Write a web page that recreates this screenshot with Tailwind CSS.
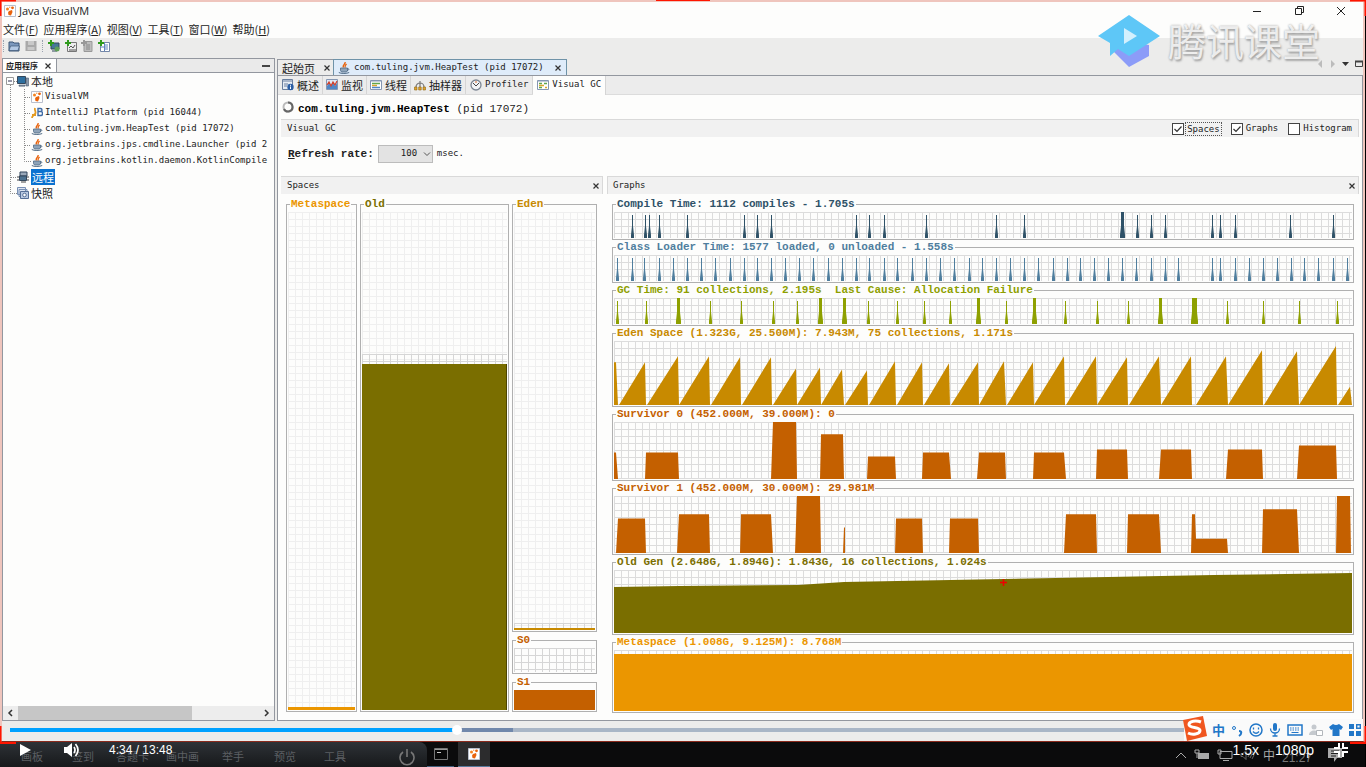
<!DOCTYPE html>
<html lang="zh-CN">
<head>
  <meta charset="UTF-8">
  <meta name="viewport" content="width=device-width, initial-scale=1.0">

  <title>Java VisualVM</title>

  <script src="https://cdn.jsdelivr.net/npm/@tailwindcss/browser@4"></script>
</head>
<body class="relative flex flex-col h-screen overflow-hidden bg-black pr-px text-[9px] text-[#222] font-['DejaVu_Sans_Mono','Noto_Sans_CJK_SC',monospace]">

  <!-- shared icons -->
  <svg class="absolute w-0 h-0" aria-hidden="true">
    <symbol id="vvm" viewBox="0 0 12 12">
      <path d="M.5.5h11v11H.5z" fill="#fff" stroke="#b9bfcc"/>
      <path d="M5 6l3-1 .5 2L7 10.500 4.500 10 4 7.500z" fill="#e8620c"/>
      <circle cx="3.500" cy="4" r="1.500" fill="#f58220"/><circle cx="8.500" cy="2.800" r="1.400" fill="#e8620c"/><circle cx="5.700" cy="2.300" r=".8" fill="#f7a35c"/>
    </symbol>
    <symbol id="java" viewBox="0 0 12 12">
      <path d="M7 0c1 2-3 3-1.500 5.500M8.500 2C7 3.500 6.500 4 7.500 5.500" fill="none" stroke="#e8620c" stroke-width="1.400"/>
      <path d="M2.500 6h7v2.500L8.500 10h-5l-1-1.500z" fill="#8ea3b8" stroke="#4f6a85" stroke-width=".8"/>
      <path d="M9.500 6.500c2 0 1.500 2-.5 2M.8 10.500c2 1.300 8 1.300 10.400 0" fill="none" stroke="#4f6a85"/>
    </symbol>
    <symbol id="host" viewBox="0 0 12 12">
      <path d="M.5 1.500h8v7h-8z" fill="#2e6f9f" stroke="#33475c"/>
      <path d="M9 3h2.500v8H9zM2 10h6v1.200H2z" fill="#8b99ab" stroke="#4a5a6e" stroke-width=".6"/>
    </symbol>
    <symbol id="tee" viewBox="0 0 14 16"><path d="M7.500 0v16M8 8.500h6" fill="none" stroke="#8a8a8a" stroke-dasharray="1 1"/></symbol>
    <symbol id="elbow" viewBox="0 0 14 16"><path d="M7.500 0v8.500H14" fill="none" stroke="#8a8a8a" stroke-dasharray="1 1"/></symbol>
    <symbol id="trunk" viewBox="0 0 14 16"><path d="M7.500 0v16" fill="none" stroke="#8a8a8a" stroke-dasharray="1 1"/></symbol>
    <symbol id="close" viewBox="0 0 8 8"><path d="M1.500 1.500l5 5M6.500 1.500l-5 5" fill="none" stroke="#333" stroke-width="1.200"/></symbol>
    <symbol id="plus" viewBox="0 0 6 6"><path d="M3 0v6M0 3h6" stroke="#2f9a1c" stroke-width="2"/></symbol>
    <symbol id="check" viewBox="0 0 12 12"><path d="M2.500 6l2.500 2.500L9.500 3.500" fill="none" stroke="#333" stroke-width="1.200"/></symbol>
  </svg>

  <div class="flex flex-col flex-1 min-h-0 bg-[#ececeb] border-2 border-b border-[#efc5bd] border-b-[#8a2a1c]">

    <header>
      <div class="flex items-center h-[18px] bg-[#fdfdfc] pl-0.5 text-[11px] font-['Open_Sans',sans-serif]">
        <svg class="size-3 mr-[3px]"><use href="#vvm"/></svg>
        <h1 class="flex-1">Java VisualVM</h1>
        <div class="flex gap-[30px] mr-4">
          <button aria-label="Minimize"><svg class="size-3" viewBox="0 0 12 12"><path d="M2 6.500h8" stroke="#222"/></svg></button>
          <button aria-label="Restore"><svg class="size-3" viewBox="0 0 12 12"><path d="M2.500 3.500h6v6h-6zM4.500 3.500v-2h6v6h-2" fill="none" stroke="#222"/></svg></button>
          <button aria-label="Close"><svg class="size-3" viewBox="0 0 12 12"><path d="M2 2l8 8M10 2l-8 8" fill="none" stroke="#222"/></svg></button>
        </div>
      </div>

      <nav class="flex items-center gap-[5px] h-[18px] bg-[#fdfdfc] pl-px text-[11px] font-['Noto_Sans_CJK_SC',sans-serif]">
        <button>文件(<u>F</u>)</button>
        <button>应用程序(<u>A</u>)</button>
        <button>视图(<u>V</u>)</button>
        <button>工具(<u>T</u>)</button>
        <button>窗口(<u>W</u>)</button>
        <button>帮助(<u>H</u>)</button>
      </nav>

      <div class="flex items-start h-5 pt-0.5 pl-px gap-1">
        <span class="h-3 border-l border-dotted border-gray-400"></span>
        <button aria-label="Open"><svg class="size-3" viewBox="0 0 12 12"><path d="M1 2h4l1 1h5v8H1z" fill="#7b98bd" stroke="#3c5676"/><path d="M2.500 6h9L10 10.500H1z" fill="#b3c9e4" stroke="#3c5676" stroke-width=".7"/></svg></button>
        <button class="ml-px" aria-label="Save"><svg class="size-3" viewBox="0 0 12 12"><path d="M.5 1h11v10H.5z" fill="#a9a9a9"/><path d="M3 1h6v4H3zM2.500 7h7v3h-7z" fill="#c9c9c9"/></svg></button>
        <span class="h-3 border-l border-dotted border-gray-400 mx-px"></span>
        <button aria-label="Add host"><svg class="size-3" viewBox="0 0 12 12"><path d="M3 3h8v6H3z" fill="#467996" stroke="#33475c"/><path d="M4 11h5" stroke="#33475c"/><circle cx="9" cy="9" r="2.500" fill="#5f9f58"/><use href="#plus" width="6" height="6"/></svg></button>
        <button aria-label="Add JMX connection"><svg class="size-3 ml-px" viewBox="0 0 12 12"><path d="M2.500 2.500h9v9h-9z" fill="#eee" stroke="#777"/><path d="M4 8l2-2 2 2 2-3M4 10h7" fill="none" stroke="#555"/><use href="#plus" width="6" height="6"/></svg></button>
        <button aria-label="Add dump"><svg class="size-3" viewBox="0 0 12 12"><path d="M3 1.500h8v10H3z" fill="#bdbdbd" stroke="#999"/><path d="M5 5h4M5 7h4M5 9h4" stroke="#888"/><path d="M3 0v6M0 3h6" stroke="#999" stroke-width="2"/></svg></button>
        <button aria-label="Load snapshot"><svg class="size-3 ml-px" viewBox="0 0 12 12"><path d="M2.500 2.500h9v9h-9z" fill="#fff" stroke="#7387a8"/><path d="M6.500 3v8M7 5h3M7 7h3M7 9h3M3 7h3" stroke="#5f83bd"/><use href="#plus" width="6" height="6"/></svg></button>
      </div>
    </header>

    <main class="flex flex-1 min-h-0 gap-0.5">

      <!-- applications tree -->
      <aside class="flex flex-col w-[273px] shrink-0 border border-[#93979f] bg-[#fdfdfc]">
        <div class="flex items-center h-[14px] bg-[#eaeaea] border-b border-[#93979f] pr-1">
          <h2 class="flex items-center gap-1.5 h-full bg-white border-r border-[#93979f] pl-[3px] pr-1 font-bold text-[8px] leading-none font-['Noto_Sans_CJK_SC',sans-serif]">应用程序
            <button aria-label="Close"><svg class="size-2"><use href="#close"/></svg></button>
          </h2>
          <button class="ml-auto w-2 h-0.5 bg-[#444]" aria-label="Minimize panel"></button>
        </div>

        <ul class="flex-1 overflow-hidden whitespace-nowrap">
          <li class="flex items-center h-4">
            <svg class="w-[14px] h-4 shrink-0" viewBox="0 0 14 16"><path d="M7.500 12v4M11 8.500h3" stroke="#8a8a8a" stroke-dasharray="1 1"/><path d="M3.500 4.500h7v7h-7z" fill="#fff" stroke="#999"/><path d="M5 8h4" stroke="#335"/></svg>
            <svg class="size-3 mr-0.5"><use href="#host"/></svg><span class="text-[11px] leading-4 font-['Noto_Sans_CJK_SC',sans-serif]">本地</span>
          </li>
          <li class="flex items-center h-4">
            <svg class="w-[14px] h-4 shrink-0"><use href="#trunk"/></svg><svg class="w-[14px] h-4 shrink-0"><use href="#tee"/></svg>
            <svg class="size-3 mr-0.5 shrink-0"><use href="#vvm"/></svg>VisualVM
          </li>
          <li class="flex items-center h-4">
            <svg class="w-[14px] h-4 shrink-0"><use href="#trunk"/></svg><svg class="w-[14px] h-4 shrink-0"><use href="#tee"/></svg>
            <svg class="size-3 mr-0.5 shrink-0" viewBox="0 0 12 12"><path d="M4 1c-1 3 2 4 0 6s-3 2-3 4M1 8h4" fill="none" stroke="#e39a20" stroke-width="1.800"/><path d="M7 1.500h2.500c2 0 2 3 0 3H7zm0 3h3c2 0 2 4 0 4H7z" fill="none" stroke="#3f6ba5" stroke-width="1.400"/></svg>IntelliJ Platform (pid 16044)
          </li>
          <li class="flex items-center h-4">
            <svg class="w-[14px] h-4 shrink-0"><use href="#trunk"/></svg><svg class="w-[14px] h-4 shrink-0"><use href="#tee"/></svg>
            <svg class="size-3 mr-0.5 shrink-0"><use href="#java"/></svg>com.tuling.jvm.HeapTest (pid 17072)
          </li>
          <li class="flex items-center h-4">
            <svg class="w-[14px] h-4 shrink-0"><use href="#trunk"/></svg><svg class="w-[14px] h-4 shrink-0"><use href="#tee"/></svg>
            <svg class="size-3 mr-0.5 shrink-0"><use href="#java"/></svg>org.jetbrains.jps.cmdline.Launcher (pid 2
          </li>
          <li class="flex items-center h-4">
            <svg class="w-[14px] h-4 shrink-0"><use href="#trunk"/></svg><svg class="w-[14px] h-4 shrink-0"><use href="#elbow"/></svg>
            <svg class="size-3 mr-0.5 shrink-0"><use href="#java"/></svg>org.jetbrains.kotlin.daemon.KotlinCompile
          </li>
          <li class="flex items-center h-4">
            <svg class="w-[14px] h-4 shrink-0"><use href="#tee"/></svg>
            <svg class="size-3 mr-0.5" viewBox="0 0 12 12"><path d="M3 1h7v4H3z" fill="#9aa9ba" stroke="#33475c"/><path d="M2.500 5h7v4.500h-7z" fill="#4d7290" stroke="#33475c"/><path d="M0 6h2M10 6h2M0 9h2M10 9h2M4 11h5" stroke="#444"/></svg><span class="bg-[#0a72d0] text-white px-px text-[11px] leading-4 font-['Noto_Sans_CJK_SC',sans-serif]">远程</span>
          </li>
          <li class="flex items-center h-4">
            <svg class="w-[14px] h-4 shrink-0"><use href="#elbow"/></svg>
            <svg class="size-3 mr-0.5" viewBox="0 0 12 12"><path d="M.5.5h8v7h-8zM2 2.500h8v7H2z" fill="#dde5f2" stroke="#7890b5"/><path d="M3.500 4.500h8v7h-8z" fill="#b9c9e2" stroke="#566f96"/><circle cx="7.500" cy="8" r="1.800" fill="#fff" stroke="#566f96"/></svg><span class="text-[11px] leading-4 font-['Noto_Sans_CJK_SC',sans-serif]">快照</span>
          </li>
        </ul>

        <div class="flex items-center h-[14px] bg-[#ededed]">
          <svg class="w-[15px] h-3" viewBox="0 0 15 12"><path d="M9 3L6 6l3 3" fill="none" stroke="#333" stroke-width="1.500"/></svg>
          <div class="flex-1 h-full"><div class="w-[72%] h-full bg-[#c6c6c6]"></div></div>
          <svg class="w-[15px] h-3" viewBox="0 0 15 12"><path d="M6 3l3 3-3 3" fill="none" stroke="#333" stroke-width="1.500"/></svg>
        </div>
      </aside>

      <section class="flex flex-col flex-1 min-w-0">
        <div class="flex h-[18px] pt-px border-b border-[#93979f] whitespace-nowrap">
          <div class="flex items-center gap-2 pl-1 pr-0.5 border-t border-l border-[#93979f] text-[11px] leading-4 font-['Noto_Sans_CJK_SC',sans-serif]">起始页<button aria-label="Close"><svg class="size-2"><use href="#close"/></svg></button></div>
          <div class="flex items-center gap-1 px-1 border border-b-0 border-[#6f93a8] bg-[#dfecfa]">
            <svg class="size-3"><use href="#java"/></svg>com.tuling.jvm.HeapTest (pid 17072)<button class="ml-1.5" aria-label="Close"><svg class="size-2"><use href="#close"/></svg></button>
          </div>
          <svg class="ml-auto w-[46px] h-3" viewBox="0 0 46 12"><path d="M5 1v8L1 5zM14 1v8l4-4z" fill="#bcbcbc"/><path d="M25 3h7l-3.500 4z" fill="#333"/><path d="M38.500 2.500h7v5h-7z" fill="none" stroke="#444"/><path d="M38 2.500h8" stroke="#444" stroke-width="2"/></svg>
        </div>

        <div class="flex flex-col flex-1 min-h-0 border border-t-0 border-[#93979f] bg-[#fdfdfc]">
          <div class="flex h-[19px] bg-[#ececec] border-b border-[#dcdcdc] pl-px [&>button]:flex [&>button]:items-center [&>button]:gap-[3px] [&>button]:border-r [&>button]:border-[#d5d5d5]">
            <button class="px-[3px] text-[11px] leading-4 font-['Noto_Sans_CJK_SC',sans-serif]"><svg class="size-3" viewBox="0 0 12 12"><path d="M.5.5h10v10H.5z" fill="#e7edf5" stroke="#6a7f9e"/><path d="M1 2h9M2 5h4M2 7h3" stroke="#6a7f9e"/><circle cx="8.500" cy="8" r="3.200" fill="#2c5fa5"/><path d="M8.500 5.800v1M8.500 7.500V10" stroke="#fff"/></svg>概述</button>
            <button class="px-[3px] text-[11px] leading-4 font-['Noto_Sans_CJK_SC',sans-serif]"><svg class="size-3" viewBox="0 0 12 12"><path d="M.5.5h11v10H.5z" fill="#dfe8f4" stroke="#8496b2"/><path d="M1 10V7l2-3 2 3 2-4 2 4 2-3v6z" fill="#4f86c6"/><path d="M1 6l2-3 2 4 2-4 2 3 2-4" fill="none" stroke="#d0402b" stroke-width="1.200"/></svg>监视</button>
            <button class="px-[3px] text-[11px] leading-4 font-['Noto_Sans_CJK_SC',sans-serif]"><svg class="size-3" viewBox="0 0 12 12"><path d="M.5 1.500h11v9H.5z" fill="#fff" stroke="#8496b2"/><path d="M1 2h10" stroke="#8496b2"/><path d="M2 4.500h8" stroke="#5fa64f" stroke-width="1.500"/><path d="M2 6.500h5" stroke="#d8a62e" stroke-width="1.500"/><path d="M2 8.500h8" stroke="#4f86c6" stroke-width="1.500"/></svg>线程</button>
            <button class="px-[3px] text-[11px] leading-4 font-['Noto_Sans_CJK_SC',sans-serif]"><svg class="size-3" viewBox="0 0 12 12"><path d="M2 8a4 4 0 1 1 8 0M6 2v7" fill="none" stroke="#777" stroke-width="1.200"/><path d="M.5 8h2.500v3H.5zM4.700 8h2.500v3H4.700zM9 8h2.500v3H9z" fill="#e2a52d" stroke="#8f6514" stroke-width=".6"/></svg>抽样器</button>
            <button class="px-1"><svg class="size-3" viewBox="0 0 12 12"><circle cx="6" cy="6" r="5" fill="#f2f4f7" stroke="#7d8794" stroke-width="1.300"/><path d="M3 4l3 3 3-3" fill="none" stroke="#444"/><path d="M6 2v2" stroke="#d8682a"/></svg>Profiler</button>
            <button class="px-1 bg-[#fdfdfc] -mb-px pb-0.5"><svg class="size-3" viewBox="0 0 12 12"><path d="M.5 1.500h11v9H.5z" fill="#fff" stroke="#8496b2"/><path d="M1 2h10" stroke="#8496b2"/><path d="M2 4.500h3M7 4.500h3M2 8.500h3" stroke="#5fa64f" stroke-width="1.500"/><path d="M2 6.500h5M8 8.500h2" stroke="#d8a62e" stroke-width="1.500"/></svg>Visual GC</button>
          </div>

          <div class="flex items-center gap-1 h-6 px-1 pt-1 text-[11px] font-['Liberation_Mono',monospace]">
            <svg class="size-3 -mt-1" viewBox="0 0 12 12"><circle cx="6" cy="6" r="4.500" fill="none" stroke="#bbb" stroke-width="2"/><path d="M6 1.500A4.500 4.500 0 1 1 2 8" fill="none" stroke="#666" stroke-width="2"/></svg>
            <p><b class="text-black">com.tuling.jvm.HeapTest</b> (pid 17072)</p>
          </div>

          <div class="flex flex-col flex-1 px-[3px]">
            <div class="flex items-center gap-2.5 h-[18px] px-1.5 bg-[#f1f1f1] border-t border-r border-[#d9d9d9]">
              <h2 class="flex-1">Visual GC</h2>
              <label class="flex items-center gap-0.5"><span class="grid"><input type="checkbox" checked class="col-start-1 row-start-1 appearance-none size-3 border border-[#444] bg-white"><svg class="col-start-1 row-start-1 size-3 pointer-events-none"><use href="#check"/></svg></span><span class="leading-3 px-px outline-1 outline-dotted outline-[#555]">Spaces</span></label>
              <label class="flex items-center gap-[3px]"><span class="grid"><input type="checkbox" checked class="col-start-1 row-start-1 appearance-none size-3 border border-[#444] bg-white"><svg class="col-start-1 row-start-1 size-3 pointer-events-none"><use href="#check"/></svg></span>Graphs</label>
              <label class="flex items-center gap-[3px]"><input type="checkbox" class="appearance-none size-3 border border-[#444] bg-white">Histogram</label>
            </div>

            <div class="flex items-center gap-1 h-[39px] pl-[7px] pb-1.5">
              <label for="rate" class="font-bold text-[11px] leading-4 font-['Liberation_Mono',monospace]"><u>R</u>efresh rate:</label>
              <span class="grid items-center">
                <select id="rate" class="col-start-1 row-start-1 appearance-none w-[55px] h-[18px] pl-[22px] border border-[#bcbcbc] bg-[#e3e3e3]"><option>100</option><option>200</option><option>500</option></select>
                <svg class="col-start-1 row-start-1 justify-self-end size-2 mr-0.5 pointer-events-none" viewBox="0 0 8 8"><path d="M1 2.500l3 3 3-3" fill="none" stroke="#555"/></svg>
              </span>
              <span>msec.</span>
            </div>

            <div class="grid grid-cols-[322px_1fr] gap-1 flex-1 [&_fieldset]:min-w-0 [&_fieldset]:border [&_fieldset]:border-[#b0b0b0] [&_fieldset]:px-px [&_fieldset]:pb-px [&_legend]:ml-0.5 [&_legend]:px-px [&_legend]:text-[11px] [&_legend]:leading-3 [&_legend]:font-bold [&_legend]:font-['Liberation_Mono',monospace]">

              <section class="flex flex-col">
                <div class="flex items-center justify-between h-[18px] pl-1.5 pr-0.5 bg-[#f1f1f1] border-t border-r border-[#d9d9d9]">
                  <h3>Spaces</h3>
                  <button aria-label="Close Spaces"><svg class="size-2"><use href="#close"/></svg></button>
                </div>
                <div class="grid grid-cols-[71fr_149fr_85fr] gap-[3px] flex-1 pt-1 pb-2 pl-[5px] pr-1.5">
                  <fieldset class="flex flex-col">
                    <legend class="text-[#eb9600]">Metaspace</legend>
                    <div class="flex flex-col justify-end flex-1 mt-0.5 bg-[linear-gradient(#efefef_1px,transparent_1px),linear-gradient(90deg,#efefef_1px,transparent_1px)] bg-size-[7px_7px]">
                      <div class="h-[3px] bg-[#eb9600]"></div>
                    </div>
                  </fieldset>
                  <fieldset class="flex flex-col">
                    <legend class="text-[#7a6e00]">Old</legend>
                    <div class="flex flex-col justify-end flex-1 mt-0.5 bg-[linear-gradient(#efefef_1px,transparent_1px),linear-gradient(90deg,#efefef_1px,transparent_1px)] bg-size-[7px_7px]">
                      <div class="h-2.5 bg-[linear-gradient(#d6d6d6_1px,transparent_1px),linear-gradient(90deg,#d6d6d6_1px,transparent_1px)] bg-size-[7px_7px]"></div>
                      <div class="h-[69.5%] bg-[#7a6e00] border-r border-[#4d4500]"></div>
                    </div>
                  </fieldset>
                  <div class="flex flex-col gap-0.5">
                    <fieldset class="flex flex-col flex-1">
                      <legend class="text-[#c88a00]">Eden</legend>
                      <div class="flex flex-col justify-end flex-1 mt-0.5 bg-[linear-gradient(#efefef_1px,transparent_1px),linear-gradient(90deg,#efefef_1px,transparent_1px)] bg-size-[7px_7px]">
                        <div class="h-[5px] bg-[linear-gradient(#d6d6d6_1px,transparent_1px),linear-gradient(90deg,#d6d6d6_1px,transparent_1px)] bg-size-[7px_7px]"></div>
                        <div class="h-0.5 bg-[#c88a00]"></div>
                      </div>
                    </fieldset>
                    <fieldset>
                      <legend class="text-[#c46000]">S0</legend>
                      <div class="h-6 mt-0.5 bg-[linear-gradient(#d6d6d6_1px,transparent_1px),linear-gradient(90deg,#d6d6d6_1px,transparent_1px)] bg-size-[7px_7px]"></div>
                    </fieldset>
                    <fieldset>
                      <legend class="text-[#c46000]">S1</legend>
                      <div class="h-5 mt-0.5 bg-[#c46000]"></div>
                    </fieldset>
                  </div>
                </div>
              </section>

              <section class="flex flex-col min-w-0">
                <div class="flex items-center justify-between h-[18px] pl-[5px] pr-0.5 bg-[#f1f1f1] border-t border-x border-[#d9d9d9]">
                  <h3>Graphs</h3>
                  <button aria-label="Close Graphs"><svg class="size-2"><use href="#close"/></svg></button>
                </div>
                <div class="flex flex-col gap-px pt-1 pl-[5px] pr-[5px] [&_svg]:block [&_svg]:w-full [&_svg]:mt-0.5 [&_svg]:bg-[linear-gradient(#dcdcdc_1px,transparent_1px),linear-gradient(90deg,#dcdcdc_1px,transparent_1px)] [&_svg]:bg-size-[7px_7px]">
                  <fieldset>
                    <legend class="text-[#2f5268]">Compile Time: 1112 compiles - 1.705s</legend>
                    <svg class="h-[26px] fill-[#2f5268]" viewBox="0 0 738 26" preserveAspectRatio="none"><path id="compile"/></svg>
                  </fieldset>
                  <fieldset>
                    <legend class="text-[#4f7e9e]">Class Loader Time: 1577 loaded, 0 unloaded - 1.558s</legend>
                    <svg class="h-[26px] fill-[#4f7e9e]" viewBox="0 0 738 26" preserveAspectRatio="none"><path id="loader"/></svg>
                  </fieldset>
                  <fieldset>
                    <legend class="text-[#8ea000] whitespace-pre">GC Time: 91 collections, 2.195s  Last Cause: Allocation Failure</legend>
                    <svg class="h-[26px] fill-[#8ea000]" viewBox="0 0 738 26" preserveAspectRatio="none"><path id="gc"/></svg>
                  </fieldset>
                  <fieldset>
                    <legend class="text-[#c88a00]">Eden Space (1.323G, 25.500M): 7.943M, 75 collections, 1.171s</legend>
                    <svg class="h-16 fill-[#c88a00]" viewBox="0 0 738 63" preserveAspectRatio="none"><path id="eden"/></svg>
                  </fieldset>
                  <fieldset>
                    <legend class="text-[#c46000]">Survivor 0 (452.000M, 39.000M): 0</legend>
                    <svg class="h-[57px] fill-[#c46000]" viewBox="0 0 738 56" preserveAspectRatio="none"><path id="s0"/></svg>
                  </fieldset>
                  <fieldset>
                    <legend class="text-[#c46000]">Survivor 1 (452.000M, 30.000M): 29.981M</legend>
                    <svg class="h-[57px] fill-[#c46000]" viewBox="0 0 738 56" preserveAspectRatio="none"><path id="s1"/></svg>
                  </fieldset>
                  <fieldset>
                    <legend class="text-[#7a6e00]">Old Gen (2.648G, 1.894G): 1.843G, 16 collections, 1.024s</legend>
                    <svg class="h-[63px] fill-[#7a6e00]" viewBox="0 0 738 63" preserveAspectRatio="none"><path d="M0 63V17l66-1 118-1 46-3 160-3 210-4 138-2v60z"/><path d="M386 12.500h7M389.500 9v7" stroke="#f00000" stroke-width="1.500"/></svg>
                  </fieldset>
                  <fieldset>
                    <legend class="text-[#eb9600]">Metaspace (1.008G, 9.125M): 8.768M</legend>
                    <svg class="h-[61px] fill-[#eb9600]" viewBox="0 0 738 61" preserveAspectRatio="none"><path d="M0 4h738v57H0z"/></svg>
                  </fieldset>
                </div>
              </section>

            </div>
          </div>
        </div>
      </section>
    </main>

    <div class="h-5 shrink-0"></div>
  </div>

  <!-- taskbar -->
  <footer class="flex items-stretch h-[25px] bg-[#0b0b0c] text-[11px] text-[#5c5f63] font-['Noto_Sans_CJK_SC',sans-serif]">
    <div class="flex items-center w-[427px] pl-[21px] pt-1 rounded-tr-lg bg-linear-to-b from-[#2e3237] to-[#17191b]">
      <span class="w-[51px]">画板</span><span class="w-11">签到</span><span class="w-[50px]">答题卡</span><span class="w-14">画中画</span><span class="w-[52px]">举手</span><span class="w-[50px]">预览</span><span>工具</span>
      <svg class="size-5 ml-auto mr-2.5" viewBox="0 0 20 20"><path d="M6 5a7 7 0 1 0 8 0M10 2v8" fill="none" stroke="#777" stroke-width="1.600"/></svg>
    </div>
    <div class="flex items-center justify-center w-[27px] border-b border-[#44617e]"><svg class="w-[14px] h-3" viewBox="0 0 14 12"><path d="M.5.5h13v11H.5z" fill="#090909" stroke="#777"/><path d="M1 1.500h12" stroke="#999"/><path d="M3 4.500h4" stroke="#ccc"/></svg></div>
    <div class="flex items-center justify-center w-8 ml-1 bg-[#2c2c2d] border-b border-[#57799b]"><svg class="size-3"><use href="#vvm"/></svg></div>
    <div class="flex items-center gap-[7px] ml-auto mr-[22px] text-[#aaa]">
      <svg class="size-3" viewBox="0 0 12 12"><path d="M1 9l5-5 5 5" fill="none" stroke="#aaa"/></svg>
      <svg class="w-4 h-3" viewBox="0 0 16 12"><path d="M4 4h11v6H4z" fill="#aaa"/><path d="M1 1h4v3H1zM3 4v5" fill="none" stroke="#aaa"/></svg>
      <svg class="w-4 h-3" viewBox="0 0 16 12"><path d="M3 2.500h12v7H3zM6 11.500h6M1 1h3v4H1z" fill="none" stroke="#aaa"/></svg>
      <svg class="w-4 h-3" viewBox="0 0 16 12"><path d="M1 4.500h2l3-3v9l-3-3H1zM8 4l1 2-1 2M10 3l1.500 3L10 9M12 2l2 4-2 4" fill="none" stroke="#666"/></svg>
      <span class="text-xs">中</span>
      <span class="pt-1.5 text-xs text-[#777] font-['Liberation_Sans',sans-serif]">21:27</span>
      <svg class="size-4 ml-2" viewBox="0 0 16 16"><path d="M1 1h14v10h-5l-3 4v-4H1z" fill="#aaa"/><path d="M4 4h8M4 6.500h8M4 9h5" stroke="#222"/></svg>
    </div>
  </footer>

  <!-- recording frame corners -->
  <svg class="absolute left-0 top-0 w-4 h-4" viewBox="0 0 16 16"><path d="M16 .5H.5V16" fill="none" stroke="#ff1500" stroke-width="2"/></svg>
  <div class="absolute left-1/2 top-0 w-[54px] h-px -translate-x-1/2 bg-[#ff1500]"></div>
  <svg class="absolute right-0 top-0 w-4 h-4" viewBox="0 0 16 16"><path d="M0 .5h15.500V16" fill="none" stroke="#ff1500" stroke-width="2"/></svg>
  <svg class="absolute left-0 bottom-[23px] w-4 h-[18px]" viewBox="0 0 16 18"><path d="M.5 0v17H16" fill="none" stroke="#ff1500" stroke-width="2"/></svg>
  <svg class="absolute right-0 bottom-[23px] w-4 h-[18px]" viewBox="0 0 16 18"><path d="M15.500 0v17H0" fill="none" stroke="#ff1500" stroke-width="2"/></svg>

  <!-- watermark -->
  <div class="absolute right-[46px] top-3 flex items-center gap-2 pointer-events-none">
    <svg class="w-[62px] h-14" viewBox="0 0 62 56"><path d="M15 39l16-9 20 3v11L31 55z" fill="#8c9cf8"/><path d="M31 3l31 21-31 20-11-7-8 7V31L0 24z" fill="#5ec7f7"/><path d="M26 16v16l13-8z" fill="#d3f0fd"/></svg>
    <span class="text-[38px] leading-[54px] text-white/80 font-['Noto_Sans_CJK_SC',sans-serif] [text-shadow:0_0_2px_#999,1px_2px_2px_#aaa]">腾讯课堂</span>
  </div>

  <!-- player controls -->
  <div class="absolute inset-x-0 bottom-0 h-[42px] text-white font-['Liberation_Sans',sans-serif]">
    <input type="range" min="0" max="828" value="274" aria-label="Progress" class="absolute left-2.5 right-2.5 top-[3px] w-[calc(100%-20px)] h-1 appearance-none bg-[linear-gradient(90deg,#00a1ff_33%,#7188ab_33%_37.4%,#a9b6c6_37.4%)] [&::-webkit-slider-thumb]:appearance-none [&::-webkit-slider-thumb]:size-2.5 [&::-webkit-slider-thumb]:rounded-full [&::-webkit-slider-thumb]:bg-white">
    <div class="flex items-center h-full pt-[7px] pl-[19px] pr-[18px]">
      <button aria-label="Play"><svg class="w-3 h-3.5" viewBox="0 0 12 14"><path d="M1 1l11 6-11 6z" fill="#fff"/></svg></button>
      <button class="ml-8" aria-label="Volume"><svg class="w-[18px] h-4" viewBox="0 0 18 16"><path d="M1 5h3l5-4v14l-5-4H1z" fill="#fff"/><path d="M11 5q2 3 0 6M12.500 2q5 6 0 12" fill="none" stroke="#fff" stroke-width="1.700"/></svg></button>
      <span class="ml-7 text-xs">4:34 / 13:48</span>
      <button class="ml-auto text-sm">1.5x</button>
      <button class="ml-4 text-sm">1080p</button>
      <button class="ml-5" aria-label="Exit full screen"><svg class="size-3.5" viewBox="0 0 14 14"><path d="M5 0v5H0M9 0v5h5M5 14V9H0M9 14V9h5" fill="none" stroke="#fff" stroke-width="2"/></svg></button>
    </div>
  </div>

  <!-- input method bar -->
  <div class="absolute right-[3px] bottom-[26px] flex items-center gap-1.5 h-[22px] pl-6 pr-0.5 bg-[#fafafa] text-[#2277c8] text-[13px] font-bold font-['Noto_Sans_CJK_SC',sans-serif]">
    <svg class="absolute -left-1 -top-1 w-7 h-7" viewBox="0 0 28 28"><path d="M3 5L23 1l4 20L7 26z" fill="#f0561f"/><path d="M21 7c-5-2-12-1-12 2.500 0 4 11 2 11 6S12 20 8 18" fill="none" stroke="#fff" stroke-width="3"/></svg>
    <span class="ml-1">中</span>
    <svg class="w-3 h-3.5" viewBox="0 0 12 14"><circle cx="3" cy="5" r="1.500" fill="none" stroke="#2277c8"/><path d="M8 8c3 0 3 3 0 5" fill="none" stroke="#2277c8" stroke-width="2"/></svg>
    <svg class="size-3.5" viewBox="0 0 14 14"><circle cx="7" cy="7" r="6" fill="none" stroke="#2277c8" stroke-width="1.500"/><path d="M4.500 4.500v2M9.500 4.500v2M4 8.500q3 3.500 6 0" fill="none" stroke="#2277c8" stroke-width="1.300"/></svg>
    <svg class="w-3 h-3.5" viewBox="0 0 12 14"><rect x="4" width="4" height="8" rx="2" fill="#2277c8"/><path d="M1.500 5.500a4.500 4.500 0 0 0 9 0M6 10v3M3.500 13h5" fill="none" stroke="#2277c8" stroke-width="1.300"/></svg>
    <svg class="w-4 h-3" viewBox="0 0 16 12"><path d="M1 1h14v10H1z" fill="none" stroke="#2277c8" stroke-width="1.500"/><path d="M3 4h10M3 6h10" stroke="#2277c8" stroke-dasharray="1.500 1"/><path d="M4.500 8.500h7" stroke="#2277c8"/></svg>
    <svg class="size-3.5" viewBox="0 0 14 14"><circle cx="5" cy="4" r="2.500" fill="#c5c9ce"/><path d="M0 12c0-6 10-6 10 0z" fill="#c5c9ce"/><path d="M7.500 7.500h6v5h-6z" fill="#fff" stroke="#b2b6bb"/></svg>
    <svg class="w-3.5 h-3" viewBox="0 0 14 12"><path d="M4 0q3 2 6 0l4 3-2 3-1.500-1v7h-7V5L2 6 0 3z" fill="#2277c8"/></svg>
    <svg class="size-3" viewBox="0 0 12 12"><path d="M0 0h5v5H0zM0 7h5v5H0zM7 7h5v5H7z" fill="#2277c8"/><path d="M7.700.7h3.600v3.600H7.700z" fill="none" stroke="#2277c8" stroke-width="1.400"/></svg>
  </div>

  <script>
    // spikes: x position, optionally [x, extra half width] for the tall ones
    function spikes(list) {
      return list.map(item => {
        const [x, w] = Array.isArray(item) ? item : [item, 0];
        const top = w ? 0 : 3;
        return `M${x - 1 - w} 26V23L${x - w} 14V${top}H${x + 1 + w}V14L${x + 2 + w} 23V26Z`;
      }).join('');
    }

    // teeth: start, peak x, peak y, end
    function teeth(list) {
      return list.map(([a, x, y, b]) => `M${a} 63L${x} ${y}L${b} 63Z`).join('');
    }

    // blocks: bottom left, top left, top right, bottom right, top
    function blocks(list) {
      return list.map(([a, b, c, d, y]) => `M${a} 56L${b} ${y}H${c}L${d} 56Z`).join('');
    }

    function draw(id, d) {
      document.getElementById(id).setAttribute('d', d);
    }

    draw('compile', spikes([18, 31, 35, 45, 73, 130, 143, 157, 242, 255, 270, 312, 382, 410, [508, 1], 523, 537, 551, 598, 606, 621, 676, 719]));

    draw('loader', spikes([3, 18, 30, 45, 59, 73, 87, 101, 116, 130, 143, 157, 171, 185, 199, 214, 228, 242, 255, 270, 283, 298, 312,
      326, 340, 355, 368, 382, 396, 410, 424, 439, 453, 466, 480, 494, 508, 522, 537, 551, 564, 598, 606, 621, 635, 649, 663,
      677, 690, 704, 719, 733]));

    draw('gc', spikes([3, 32, [64, 1], 96, 127, 159, 183, [206, 1], [230, 1], 254, 283, 310, 336, [364, 1], 392, [420, 1], 451, 483,
      514, [546, 1], [580, 2], 613, 649, 685, 723]));

    draw('eden', 'M0 63V21H2L4 63Z' + teeth([[5, 31, 21, 32], [33, 64, 15, 65], [65, 95, 15, 96], [97, 126, 16, 127], [128, 157, 16, 158],
      [159, 182, 27, 183], [183, 206, 26, 207], [207, 228, 28, 230], [231, 253, 29, 254], [255, 281, 20, 282], [283, 308, 21, 309],
      [310, 335, 22, 336], [337, 364, 21, 365], [365, 390, 20, 392], [393, 419, 21, 420], [420, 450, 15, 451], [452, 482, 15, 483],
      [483, 513, 16, 514], [515, 545, 15, 547], [547, 577, 15, 578], [582, 612, 15, 614], [614, 648, 9, 649], [650, 683, 10, 685],
      [685, 722, 5, 723], [724, 736, 45, 738]]));

    draw('s0', blocks([[0, 0, 2, 4, 30], [31, 32, 64, 65, 30], [157, 159, 182, 183, 0], [206, 207, 229, 230, 12], [253, 254, 281, 282, 34],
      [308, 309, 335, 337, 30], [419, 420, 450, 452, 30], [363, 365, 391, 392, 30], [482, 483, 513, 514, 27], [545, 547, 577, 578, 27],
      [612, 614, 648, 649, 27], [683, 685, 722, 723, 23]]));

    draw('s1', 'M577 56L578 18H581L582 42H613L614 56Z' + blocks([[2, 4, 31, 32, 22], [63, 65, 95, 96, 18], [126, 127, 157, 159, 18],
      [181, 183, 206, 207, 0], [229, 230, 231, 231, 31], [281, 282, 308, 309, 22], [335, 336, 364, 365, 22], [450, 452, 482, 483, 18],
      [513, 514, 545, 547, 18], [648, 649, 683, 685, 13], [722, 723, 736, 737, 0]]));
  </script>
</body>
</html>
